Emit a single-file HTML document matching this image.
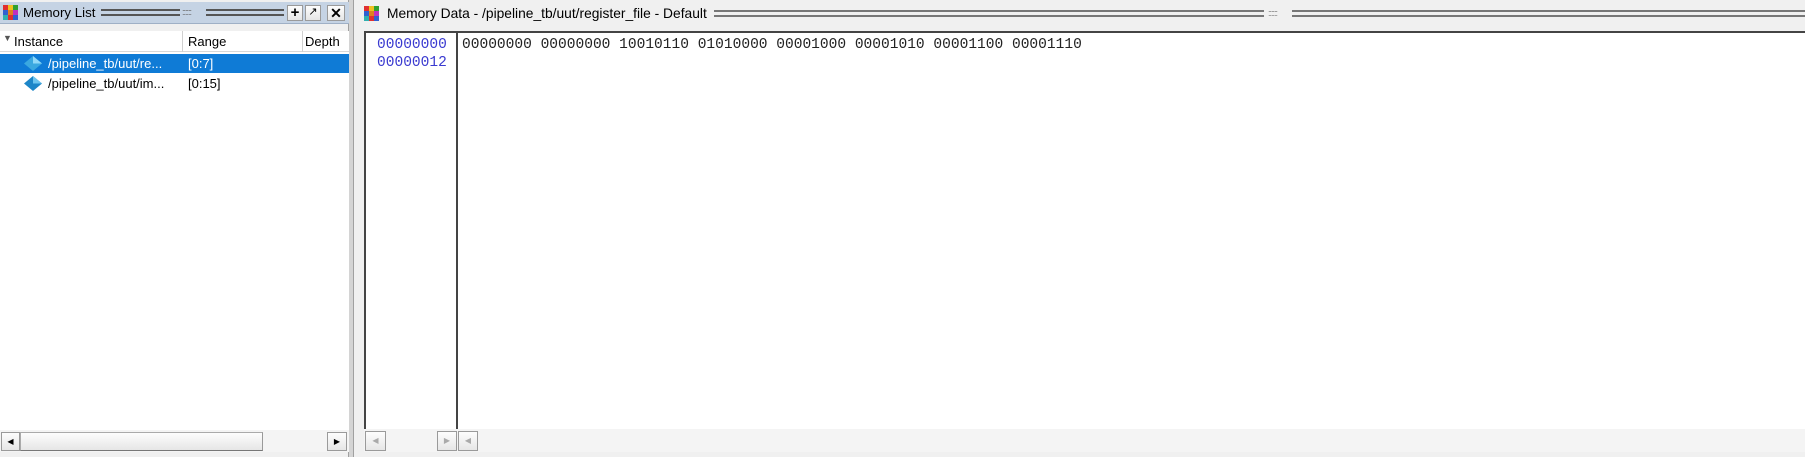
<!DOCTYPE html>
<html><head><style>
*{margin:0;padding:0;box-sizing:border-box}
body{width:1805px;height:457px;background:#d4d4d4;position:relative;overflow:hidden;font-family:"Liberation Sans",sans-serif;font-size:13px;color:#000}
.a{position:absolute}
.grip{position:absolute;height:7px;border-top:2px solid #555;border-bottom:2px solid #555;top:8px}
.btn{position:absolute;background:linear-gradient(#fdfdfd,#e6e6e6);border:1px solid #9a9a9a}
.mono{font-family:"Liberation Mono",monospace;font-size:14.55px}
</style></head><body>
<div class="a" style="left:0;top:0;width:349px;height:457px;background:#f0f0f0;border-right:1px solid #a0a0a0"></div>
<div class="a" style="left:0;top:2px;width:349px;height:22px;background:#c5d3e4;border-bottom:1px solid #9fb0c6"></div>
<svg class="a" style="left:3px;top:5px" width="16" height="16"><rect x="0" y="0" width="5" height="5" fill="#e03030"/><rect x="5" y="0" width="5" height="5" fill="#f0c020"/><rect x="10" y="0" width="5" height="5" fill="#30a030"/><rect x="0" y="5" width="5" height="5" fill="#3060d0"/><rect x="5" y="5" width="5" height="5" fill="#e08020"/><rect x="10" y="5" width="5" height="5" fill="#c030c0"/><rect x="0" y="10" width="5" height="5" fill="#30b0b0"/><rect x="5" y="10" width="5" height="5" fill="#e03030"/><rect x="10" y="10" width="5" height="5" fill="#3060d0"/></svg>
<div class="a" style="left:23px;top:5px;font-size:13.3px">Memory List</div>
<div class="grip" style="left:101px;width:79px;top:9px"></div>
<div class="a" style="left:182px;top:7px;font-size:9px;color:#666;letter-spacing:-1px">::::::</div>
<div class="grip" style="left:206px;width:78px;top:9px"></div>
<div class="btn" style="left:287px;top:5px;width:16px;height:16px;font-weight:bold;font-size:15px;line-height:13px;text-align:center">+</div>
<div class="btn" style="left:305px;top:5px;width:16px;height:16px;font-size:11px;line-height:13px;text-align:center">&#x2197;</div>
<div class="btn" style="left:327px;top:5px;width:18px;height:16px;font-weight:bold;font-size:14px;line-height:14px;text-align:center">✕</div>
<div class="a" style="left:0;top:31px;width:349px;height:21px;background:#fff;border-bottom:1px solid #d8d8d8"></div>
<div class="a" style="left:3px;top:33px;font-size:9px;color:#555">▼</div>
<div class="a" style="left:14px;top:34px">Instance</div>
<div class="a" style="left:182px;top:31px;width:1px;height:21px;background:#d0d0d0"></div>
<div class="a" style="left:188px;top:34px">Range</div>
<div class="a" style="left:302px;top:31px;width:1px;height:21px;background:#d0d0d0"></div>
<div class="a" style="left:305px;top:34px">Depth</div>
<div class="a" style="left:0;top:52px;width:349px;height:378px;background:#fff"></div>
<div class="a" style="left:0;top:54px;width:349px;height:19px;background:#0f7bd6"></div>
<svg class="a" style="left:23px;top:55px" width="20" height="17"><path d="M10 1 L19 8.5 L10 16 L1 8.5Z" fill="#3aa8e0"/><path d="M10 1 L19 8.5 L10 8.5Z" fill="#8fd8f8"/></svg>
<div class="a" style="left:48px;top:56px;color:#fff">/pipeline_tb/uut/re...</div>
<div class="a" style="left:188px;top:56px;color:#fff">[0:7]</div>
<svg class="a" style="left:23px;top:75px" width="20" height="17"><path d="M10 1 L19 8.5 L10 16 L1 8.5Z" fill="#1d86c8"/><path d="M10 1 L19 8.5 L10 8.5Z" fill="#6cc4ee"/></svg>
<div class="a" style="left:48px;top:76px">/pipeline_tb/uut/im...</div>
<div class="a" style="left:188px;top:76px">[0:15]</div>
<div class="a" style="left:0;top:430px;width:349px;height:22px;background:#f4f4f4"></div>
<div class="btn" style="left:1px;top:432px;width:19px;height:19px;font-size:8px;line-height:17px;text-align:center">◀</div>
<div class="btn" style="left:20px;top:432px;width:243px;height:19px;border-color:#aaa #999 #777 #aaa"></div>
<div class="btn" style="left:327px;top:432px;width:20px;height:19px;font-size:8px;line-height:17px;text-align:center">▶</div>
<div class="a" style="left:353px;top:0;width:1452px;height:457px;background:#f0f0f0;border-left:1px solid #a0a0a0"></div>
<div class="a" style="left:355px;top:2px;width:1450px;height:26px;background:#f0f0f0"></div>
<svg class="a" style="left:364px;top:6px" width="16" height="16"><rect x="0" y="0" width="5" height="5" fill="#e03030"/><rect x="5" y="0" width="5" height="5" fill="#f0c020"/><rect x="10" y="0" width="5" height="5" fill="#30a030"/><rect x="0" y="5" width="5" height="5" fill="#3060d0"/><rect x="5" y="5" width="5" height="5" fill="#e08020"/><rect x="10" y="5" width="5" height="5" fill="#c030c0"/><rect x="0" y="10" width="5" height="5" fill="#30b0b0"/><rect x="5" y="10" width="5" height="5" fill="#e03030"/><rect x="10" y="10" width="5" height="5" fill="#3060d0"/></svg>
<div class="a" style="left:387px;top:6px;font-size:13.8px">Memory Data - /pipeline_tb/uut/register_file - Default</div>
<div class="grip" style="left:714px;width:550px;top:10px;border-color:#777"></div>
<div class="a" style="left:1268px;top:8px;font-size:9px;color:#777;letter-spacing:-1px">::::::</div>
<div class="grip" style="left:1292px;width:513px;top:10px;border-color:#777"></div>
<div class="a" style="left:364px;top:31px;width:1441px;height:2px;background:#444"></div>
<div class="a" style="left:364px;top:31px;width:2px;height:398px;background:#444"></div>
<div class="a" style="left:366px;top:33px;width:90px;height:396px;background:#fff"></div>
<div class="a" style="left:456px;top:31px;width:2px;height:398px;background:#444"></div>
<div class="a" style="left:458px;top:33px;width:1347px;height:396px;background:#fff"></div>
<div class="a mono" style="left:377px;top:36px;color:#3a3ad0;line-height:18px">00000000<br>00000012</div>
<div class="a mono" style="left:462px;top:36px;color:#222;line-height:18px;white-space:pre">00000000 00000000 10010110 01010000 00001000 00001010 00001100 00001110</div>
<div class="a" style="left:364px;top:429px;width:1441px;height:23px;background:#f4f4f4"></div>
<div class="btn" style="left:365px;top:431px;width:21px;height:20px;font-size:8px;line-height:18px;text-align:center;color:#aaa">◀</div>
<div class="btn" style="left:437px;top:431px;width:20px;height:20px;font-size:8px;line-height:18px;text-align:center;color:#aaa">▶</div>
<div class="btn" style="left:458px;top:431px;width:20px;height:20px;font-size:8px;line-height:18px;text-align:center;color:#aaa">◀</div>
</body></html>
